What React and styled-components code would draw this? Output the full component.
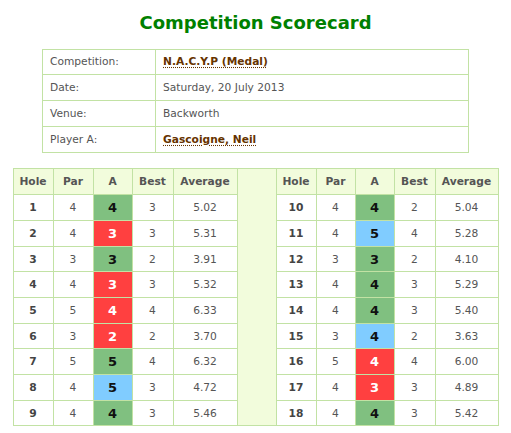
import React from "react";
import styled, { createGlobalStyle } from "styled-components";

const GlobalStyle = createGlobalStyle`
  html, body { margin: 0; padding: 0; background: #ffffff; }
  body { font-family: "DejaVu Sans", Verdana, sans-serif; color: #555555; }
`;

const BORDER = "#c2e2a4";
const HEAD_BG = "#f2fcdc";

const Page = styled.div`
  padding-top: 12px;
  display: flex;
  flex-direction: column;
  align-items: center;
`;

const Title = styled.h1`
  margin: 0;
  font-size: 18px;
  line-height: 22px;
  font-weight: bold;
  color: #008000;
`;

const InfoTable = styled.table`
  margin-top: 14.5px;
  border-collapse: collapse;
  table-layout: fixed;
  width: 427px;
`;

const InfoCell = styled.td`
  border: 1px solid ${BORDER};
  height: 24.85px;
  padding: 0 7px;
  font-size: 10.67px;
  color: #555555;
  text-align: left;
  vertical-align: middle;
`;

const InfoLink = styled.span`
  font-weight: bold;
  color: #663300;
  text-decoration: underline dotted #663300;
  text-underline-offset: 2px;
`;

const ScoreTable = styled.table`
  margin-top: 15.6px;
  border-collapse: collapse;
  table-layout: fixed;
  width: 485px;
`;

const HeadCell = styled.th`
  border: 1px solid ${BORDER};
  background: ${HEAD_BG};
  height: 25px;
  padding: 0;
  font-size: 10.67px;
  font-weight: bold;
  color: #555555;
  text-align: center;
  vertical-align: middle;
`;

const Spacer = styled.td`
  border: 1px solid ${BORDER};
  background: ${HEAD_BG};
  padding: 0;
`;

const Cell = styled.td`
  border: 1px solid ${BORDER};
  height: 24.67px;
  padding: 0;
  text-align: center;
  vertical-align: middle;
  font-size: ${(p) => (p.$score ? "13px" : "10.67px")};
  font-weight: ${(p) => (p.$bold || p.$score ? "bold" : "normal")};
  color: ${(p) =>
    p.$score === "red" ? "#ffffff" : p.$score ? "#111111" : p.$bold ? "#444444" : "#555555"};
  background: ${(p) =>
    p.$score === "green"
      ? "#80c080"
      : p.$score === "red"
      ? "#ff4040"
      : p.$score === "blue"
      ? "#80ccff"
      : "#ffffff"};
`;

const holes = [
  [1, 4, 4, 3, "5.02"],
  [2, 4, 3, 3, "5.31"],
  [3, 3, 3, 2, "3.91"],
  [4, 4, 3, 3, "5.32"],
  [5, 5, 4, 4, "6.33"],
  [6, 3, 2, 2, "3.70"],
  [7, 5, 5, 4, "6.32"],
  [8, 4, 5, 3, "4.72"],
  [9, 4, 4, 3, "5.46"],
  [10, 4, 4, 2, "5.04"],
  [11, 4, 5, 4, "5.28"],
  [12, 3, 3, 2, "4.10"],
  [13, 4, 4, 3, "5.29"],
  [14, 4, 4, 3, "5.40"],
  [15, 3, 4, 2, "3.63"],
  [16, 5, 4, 4, "6.00"],
  [17, 4, 3, 3, "4.89"],
  [18, 4, 4, 3, "5.42"],
];

const scoreColor = (par, score) =>
  score < par ? "red" : score > par ? "blue" : "green";

const widths = [40, 40, 39, 41, 64, 39, 40, 39, 39, 41, 63];

function HoleCells({ hole }) {
  const [n, par, a, best, avg] = hole;
  return (
    <>
      <Cell $bold>{n}</Cell>
      <Cell>{par}</Cell>
      <Cell $score={scoreColor(par, a)}>{a}</Cell>
      <Cell>{best}</Cell>
      <Cell>{avg}</Cell>
    </>
  );
}

const headers = ["Hole", "Par", "A", "Best", "Average"];

export default function App() {
  const front = holes.slice(0, 9);
  const back = holes.slice(9);
  return (
    <Page>
      <GlobalStyle />
      <Title>Competition Scorecard</Title>
      <InfoTable>
        <colgroup>
          <col style={{ width: 113 }} />
          <col />
        </colgroup>
        <tbody>
          <tr>
            <InfoCell>Competition:</InfoCell>
            <InfoCell>
              <InfoLink>N.A.C.Y.P (Medal)</InfoLink>
            </InfoCell>
          </tr>
          <tr>
            <InfoCell>Date:</InfoCell>
            <InfoCell>Saturday, 20 July 2013</InfoCell>
          </tr>
          <tr>
            <InfoCell>Venue:</InfoCell>
            <InfoCell>Backworth</InfoCell>
          </tr>
          <tr>
            <InfoCell>Player A:</InfoCell>
            <InfoCell>
              <InfoLink>Gascoigne, Neil</InfoLink>
            </InfoCell>
          </tr>
        </tbody>
      </InfoTable>
      <ScoreTable>
        <colgroup>
          {widths.map((w, i) => (
            <col key={i} style={{ width: w }} />
          ))}
        </colgroup>
        <tbody>
          <tr>
            {headers.map((h) => (
              <HeadCell key={"l" + h}>{h}</HeadCell>
            ))}
            <Spacer rowSpan={10} />
            {headers.map((h) => (
              <HeadCell key={"r" + h}>{h}</HeadCell>
            ))}
          </tr>
          {front.map((h, i) => (
            <tr key={i}>
              <HoleCells hole={h} />
              <HoleCells hole={back[i]} />
            </tr>
          ))}
        </tbody>
      </ScoreTable>
    </Page>
  );
}
